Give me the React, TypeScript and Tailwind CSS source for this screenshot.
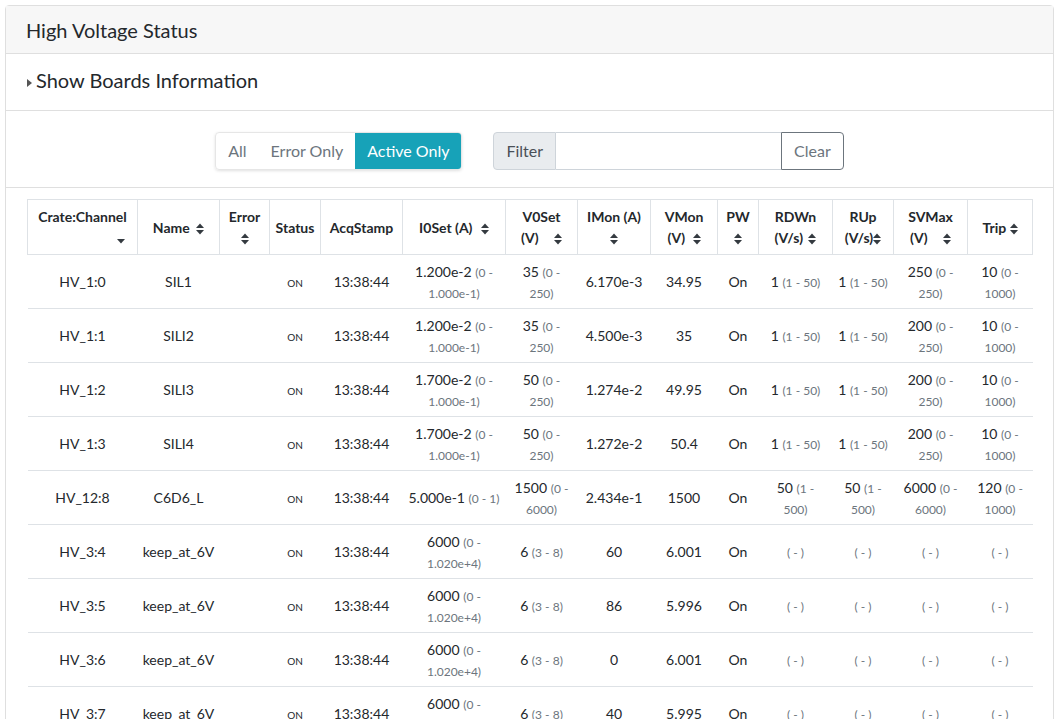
type Range = { v: string; lo?: string; hi?: string; wrap?: boolean };

interface Row {
  ch: string;
  name: string;
  i0: Range;
  v0: Range;
  imon: string;
  vmon: string;
  rdwn: Range | null;
  rup: Range | null;
  svmax: Range | null;
  trip: Range | null;
}

const rows: Row[] = [
  {
    ch: 'HV_1:0', name: 'SIL1',
    i0: { v: '1.200e-2', lo: '0', hi: '1.000e-1', wrap: true },
    v0: { v: '35', lo: '0', hi: '250', wrap: true },
    imon: '6.170e-3', vmon: '34.95',
    rdwn: { v: '1', lo: '1', hi: '50' }, rup: { v: '1', lo: '1', hi: '50' },
    svmax: { v: '250', lo: '0', hi: '250', wrap: true }, trip: { v: '10', lo: '0', hi: '1000', wrap: true },
  },
  {
    ch: 'HV_1:1', name: 'SILI2',
    i0: { v: '1.200e-2', lo: '0', hi: '1.000e-1', wrap: true },
    v0: { v: '35', lo: '0', hi: '250', wrap: true },
    imon: '4.500e-3', vmon: '35',
    rdwn: { v: '1', lo: '1', hi: '50' }, rup: { v: '1', lo: '1', hi: '50' },
    svmax: { v: '200', lo: '0', hi: '250', wrap: true }, trip: { v: '10', lo: '0', hi: '1000', wrap: true },
  },
  {
    ch: 'HV_1:2', name: 'SILI3',
    i0: { v: '1.700e-2', lo: '0', hi: '1.000e-1', wrap: true },
    v0: { v: '50', lo: '0', hi: '250', wrap: true },
    imon: '1.274e-2', vmon: '49.95',
    rdwn: { v: '1', lo: '1', hi: '50' }, rup: { v: '1', lo: '1', hi: '50' },
    svmax: { v: '200', lo: '0', hi: '250', wrap: true }, trip: { v: '10', lo: '0', hi: '1000', wrap: true },
  },
  {
    ch: 'HV_1:3', name: 'SILI4',
    i0: { v: '1.700e-2', lo: '0', hi: '1.000e-1', wrap: true },
    v0: { v: '50', lo: '0', hi: '250', wrap: true },
    imon: '1.272e-2', vmon: '50.4',
    rdwn: { v: '1', lo: '1', hi: '50' }, rup: { v: '1', lo: '1', hi: '50' },
    svmax: { v: '200', lo: '0', hi: '250', wrap: true }, trip: { v: '10', lo: '0', hi: '1000', wrap: true },
  },
  {
    ch: 'HV_12:8', name: 'C6D6_L',
    i0: { v: '5.000e-1', lo: '0', hi: '1' },
    v0: { v: '1500', lo: '0', hi: '6000', wrap: true },
    imon: '2.434e-1', vmon: '1500',
    rdwn: { v: '50', lo: '1', hi: '500', wrap: true }, rup: { v: '50', lo: '1', hi: '500', wrap: true },
    svmax: { v: '6000', lo: '0', hi: '6000', wrap: true }, trip: { v: '120', lo: '0', hi: '1000', wrap: true },
  },
  ...[
    ['HV_3:4', '60', '6.001'],
    ['HV_3:5', '86', '5.996'],
    ['HV_3:6', '0', '6.001'],
    ['HV_3:7', '40', '5.995'],
  ].map(([ch, imon, vmon]) => ({
    ch, name: 'keep_at_6V',
    i0: { v: '6000', lo: '0', hi: '1.020e+4', wrap: true },
    v0: { v: '6', lo: '3', hi: '8' },
    imon, vmon,
    rdwn: null, rup: null, svmax: null, trip: null,
  })),
];

function SortIcon({ down }: { down?: boolean }) {
  return (
    <svg width="8" height="12" viewBox="0 0 8 12" className="inline-block align-middle fill-[#343a40]">
      {!down && <path d="M0 5 L4 0.5 L8 5 Z" />}
      <path d="M0 7 L4 11.5 L8 7 Z" />
    </svg>
  );
}

const small = 'text-[12px] leading-none text-[#6c757d]';

function RangeCell({ r }: { r: Range | null }) {
  if (!r) return <span className={small}>( - )</span>;
  if (r.wrap) {
    return (
      <>
        <span className="whitespace-nowrap">
          {r.v} <span className={small}>({r.lo} -</span>
        </span>
        <br />
        <span className={small}>{r.hi})</span>
      </>
    );
  }
  return (
    <span className="whitespace-nowrap">
      {r.v} <span className={small}>({r.lo} - {r.hi})</span>
    </span>
  );
}

const th = 'border border-[#dee2e6] px-1 py-[6px] text-center align-middle font-bold leading-[21px]';
const td = 'border-b border-[#dee2e6] px-1 py-[5.5px] text-center align-middle leading-[21px]';

export default function App() {
  return (
    <div className="p-[5px] text-[#24282c]" style={{ fontFamily: 'Lato, sans-serif' }}>
      <div className="rounded border border-[#dfdfdf] bg-white">
        {/* card header */}
        <div className="border-b border-[#dfdfdf] bg-[#f7f7f7] px-5 py-[11.5px] text-[20px] leading-6">
          High Voltage Status
        </div>

        {/* boards info toggle */}
        <div className="flex items-end border-b border-[#dfdfdf] px-5 pb-[18px] pt-[14px]">
          <span className="mb-[5px] ml-[1px] mr-[4px] h-0 w-0 border-y-[4px] border-l-[5px] border-y-transparent border-l-[#555]" />
          <span className="text-[20px] leading-6">Show Boards Information</span>
        </div>

        {/* toolbar */}
        <div className="flex items-center justify-center gap-[31px] border-b border-[#dfdfdf] pb-[17px] pt-[21px]">
          <div className="flex h-[38px] overflow-hidden rounded border border-[#e6e6e6] text-[16px] shadow-[0_1px_3px_rgba(0,0,0,0.12)]">
            <button className="px-3 text-[#6c757d]">All</button>
            <button className="px-3 text-[#6c757d]">Error Only</button>
            <button className="bg-[#17a2b8] px-3 text-white">Active Only</button>
          </div>
          <div className="flex h-[38px] text-[16px]">
            <span className="flex items-center rounded-l border border-[#ced4da] bg-[#e9ecef] px-3 text-[#495057]">Filter</span>
            <input className="w-[225px] border-y border-[#ced4da] bg-white px-3 outline-none" />
            <button className="rounded-r border border-[#6c757d] px-3 text-[#6c757d]">Clear</button>
          </div>
        </div>

        {/* table */}
        <div className="px-[21px] pt-[11px]">
          <table className="w-[1005px] table-fixed border-collapse text-[14px]">
            <colgroup>
              {[110, 82, 50, 51, 82, 103, 72, 73, 67, 41, 74, 61, 74, 65].map((w, i) => (
                <col key={i} style={{ width: w }} />
              ))}
            </colgroup>
            <thead>
              <tr>
                <th className={th}>
                  Crate:Channel
                  <div className="flex h-[21px] items-center justify-end pr-[8px]"><SortIcon down /></div>
                </th>
                <th className={th}>Name <span className="ml-[3px]"><SortIcon /></span></th>
                <th className={th}>Error<br /><SortIcon /></th>
                <th className={th}>Status</th>
                <th className={th}>AcqStamp</th>
                <th className={th}>I0Set (A) <span className="ml-[5px]"><SortIcon /></span></th>
                <th className={th}>V0Set<br />(V) <span className="ml-[12px]"><SortIcon /></span></th>
                <th className={th}>IMon (A)<br /><SortIcon /></th>
                <th className={th}>VMon<br />(V) <span className="ml-[4px]"><SortIcon /></span></th>
                <th className={th}>PW<br /><SortIcon /></th>
                <th className={th}>RDWn<br />(V/s) <span className="ml-[2px]"><SortIcon /></span></th>
                <th className={th}>RUp<br /><span className="whitespace-nowrap">(V/s)<SortIcon /></span></th>
                <th className={th}>SVMax<br />(V) <span className="ml-[12px]"><SortIcon /></span></th>
                <th className={th}>Trip <SortIcon /></th>
              </tr>
            </thead>
            <tbody>
              {rows.map((r) => (
                <tr key={r.ch}>
                  <td className={td}>{r.ch}</td>
                  <td className={td}>{r.name}</td>
                  <td className={td}></td>
                  <td className={td}><span className="text-[10px] leading-none">ON</span></td>
                  <td className={td}>13:38:44</td>
                  <td className={td}><RangeCell r={r.i0} /></td>
                  <td className={td}><RangeCell r={r.v0} /></td>
                  <td className={td}>{r.imon}</td>
                  <td className={td}>{r.vmon}</td>
                  <td className={td}>On</td>
                  <td className={td}><RangeCell r={r.rdwn} /></td>
                  <td className={td}><RangeCell r={r.rup} /></td>
                  <td className={td}><RangeCell r={r.svmax} /></td>
                  <td className={td}><RangeCell r={r.trip} /></td>
                </tr>
              ))}
            </tbody>
          </table>
        </div>
      </div>
    </div>
  );
}
